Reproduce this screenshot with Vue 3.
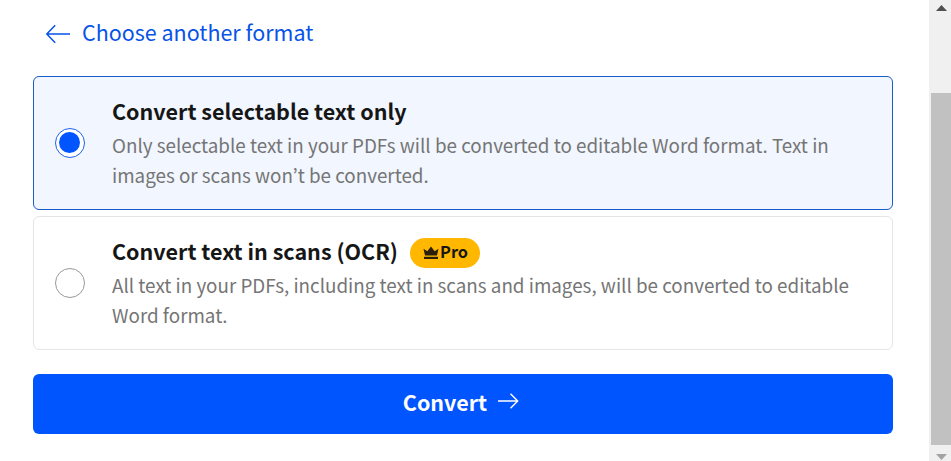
<script setup>
import { ref } from 'vue';

const selected = ref('text');

const options = [
  {
    id: 'text',
    title: 'Convert selectable text only',
    lines: [
      'Only selectable text in your PDFs will be converted to editable Word format. Text in',
      'images or scans won’t be converted.',
    ],
    pro: false,
  },
  {
    id: 'ocr',
    title: 'Convert text in scans (OCR)',
    lines: [
      'All text in your PDFs, including text in scans and images, will be converted to editable',
      'Word format.',
    ],
    pro: true,
  },
];
</script>

<template>
  <div class="page">
    <main class="content">
      <a class="back">
        <svg class="back-icon" width="26" height="20" viewBox="0 0 26 20">
          <path d="M25 10H1.8M10.2 1.2L1.8 10L10.2 18.8" />
        </svg>
        <span class="back-label">Choose another format</span>
      </a>

      <div class="options">
        <div
          v-for="option in options"
          :key="option.id"
          class="option"
          :class="{ active: selected === option.id }"
          @click="selected = option.id"
        >
          <span class="radio"></span>
          <div class="option-body">
            <div class="option-head">
              <span class="option-title">{{ option.title }}</span>
              <span v-if="option.pro" class="badge">
                <svg width="16" height="14" viewBox="0 0 16 14">
                  <path d="M0.5 2.8L4.3 5.2L8 0.6L11.7 5.2L15.5 2.8L14 9.5H2Z" />
                  <path d="M1 10.8H15V13H1Z" />
                </svg>
                <span class="badge-label">Pro</span>
              </span>
            </div>
            <div v-for="line in option.lines" :key="line" class="option-line">
              <span>{{ line }}</span>
            </div>
          </div>
        </div>
      </div>

      <button class="convert">
        <span class="convert-label">Convert</span>
        <svg width="21" height="16" viewBox="0 0 21 16">
          <path d="M0 8H19.5M12.5 0.8L19.7 8L12.5 15.2" />
        </svg>
      </button>
    </main>

    <div class="scrollbar">
      <svg class="arrow-up" width="11" height="6" viewBox="0 0 11 6">
        <path d="M0 6L5.5 0L11 6Z" />
      </svg>
      <div class="thumb"></div>
      <svg class="arrow-down" width="11" height="6" viewBox="0 0 11 6">
        <path d="M0 0H11L5.5 6Z" />
      </svg>
    </div>
  </div>
</template>

<style>
body {
  background: #fff;
  overflow: hidden;
}
</style>

<style scoped>
.page {
  display: flex;
  height: 461px;
  font-family: 'Noto Sans CJK KR', 'Noto Sans', sans-serif;
  color: #161616;
}
.content {
  flex: 1;
  min-width: 0;
  padding: 17px 36px 0 33px;
}
.back {
  display: flex;
  align-items: center;
  height: 30px;
  margin-bottom: 29px;
  padding-left: 12px;
  color: #0753e8;
  cursor: pointer;
}
.back-icon {
  margin: 4px 11px 0 0;
}
.back-icon path {
  fill: none;
  stroke: #0753e8;
  stroke-width: 1.5;
}
.back-label {
  font-size: 21.48px;
  line-height: 30px;
  white-space: nowrap;
}
.options {
  display: flex;
  flex-direction: column;
  gap: 6px;
}
.option {
  display: flex;
  align-items: center;
  box-sizing: border-box;
  height: 134px;
  padding: 0 21px;
  border: 1px solid #e5e5e5;
  border-radius: 6px;
  cursor: pointer;
}
.option.active {
  background: #f1f6ff;
  border-color: #1a5cc8;
}
.radio {
  display: flex;
  flex-shrink: 0;
  align-items: center;
  justify-content: center;
  box-sizing: border-box;
  width: 30px;
  height: 30px;
  margin-right: 27px;
  border: 1px solid #999;
  border-radius: 50%;
  background: #fff;
}
.active .radio {
  border-color: #1f62e8;
}
.active .radio::after {
  content: '';
  width: 21px;
  height: 21px;
  margin: 0 1px 1px 0;
  border-radius: 50%;
  background: #0055ff;
}
.option-head {
  display: flex;
  align-items: center;
  height: 34px;
}
.option-title {
  padding-bottom: 4px;
  font-size: 21.5px;
  font-weight: 700;
  line-height: 30px;
  white-space: nowrap;
}
.option-line {
  height: 30px;
  color: #757575;
  font-size: 18.81px;
  line-height: 30px;
  white-space: nowrap;
}
.badge {
  display: flex;
  align-items: center;
  justify-content: center;
  gap: 1px;
  box-sizing: border-box;
  width: 70px;
  height: 30px;
  margin-left: 12px;
  padding-left: 1px;
  border-radius: 15px;
  background: #ffb700;
}
.badge path {
  fill: #2b1f08;
}
.badge-label {
  padding-bottom: 3px;
  font-size: 16.3px;
  font-weight: 700;
  line-height: 27px;
}
.convert {
  display: flex;
  align-items: center;
  justify-content: center;
  gap: 11px;
  width: 100%;
  height: 60px;
  margin-top: 24px;
  padding: 0;
  border: none;
  border-radius: 6px;
  background: #0055ff;
  color: #fff;
  font-family: inherit;
  cursor: pointer;
}
.convert-label {
  padding-bottom: 5px;
  font-size: 21.47px;
  font-weight: 700;
  line-height: 30px;
}
.convert svg {
  margin: 0 4px 7px 0;
}
.convert path {
  fill: none;
  stroke: #fff;
  stroke-width: 1.4;
}
.scrollbar {
  display: flex;
  flex-direction: column;
  flex-shrink: 0;
  width: 22px;
  background: #f0f0f0;
}
.thumb {
  flex: 1;
  margin: 82px 0 9px 2px;
  background: #c1c1c1;
}
.arrow-up {
  margin: 5px 0 0 7px;
  fill: #505050;
}
.arrow-down {
  margin: 0 0 1px 7px;
  fill: #a3a3a3;
}
</style>
